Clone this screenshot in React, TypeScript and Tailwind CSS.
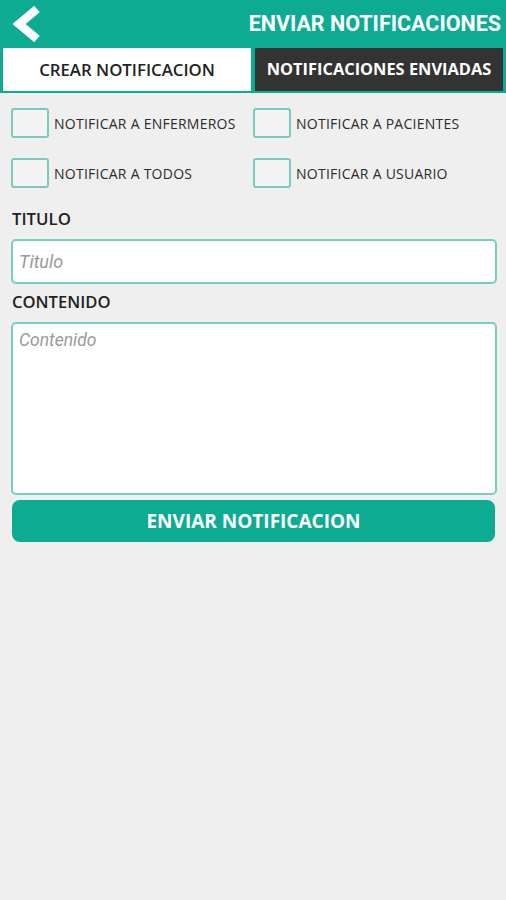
import React from "react";

const os = { fontFamily: '"Open Sans", "Noto Sans", sans-serif' };
const rb = { fontFamily: 'Roboto, "Liberation Sans", sans-serif' };

function Check({ label }: { label: string }) {
  return (
    <div className="flex items-center gap-[5px]">
      <div className="w-[38px] h-[30px] rounded-[3px] border-2 border-[#7ccabd] bg-[#f4f4f4] shrink-0" />
      <span className="text-[14px] tracking-[0.25px] text-[#2c2c2c]" style={os}>
        {label}
      </span>
    </div>
  );
}

export default function App() {
  return (
    <div className="w-[506px] h-[900px] bg-[#efefef] flex flex-col">
      <div className="h-[48px] bg-[#0cab92] flex items-center justify-between pl-[8px] pr-[5px]">
        <svg width="34" height="36" viewBox="0 0 34 36">
          <path d="M29 3 L11 18 L29 33" fill="none" stroke="white" strokeWidth="8.5" strokeLinejoin="miter" />
        </svg>
        <span className="text-white font-bold text-[21.5px] leading-none" style={rb}>
          ENVIAR NOTIFICACIONES
        </span>
      </div>
      <div className="bg-[#0cab92] h-[45px] flex px-[3px] pb-[2px] gap-[4px]">
        <div className="flex-1 bg-white flex items-center justify-center">
          <span className="text-[16.8px] font-semibold text-[#222]" style={os}>CREAR NOTIFICACION</span>
        </div>
        <div className="flex-1 bg-[#333333] flex items-center justify-center">
          <span className="text-[16.4px] font-bold text-white" style={os}>NOTIFICACIONES ENVIADAS</span>
        </div>
      </div>
      <div className="px-[11px] pt-[15px] flex flex-col">
        <div className="grid grid-cols-[242px_1fr] gap-y-[20px]">
          <Check label="NOTIFICAR A ENFERMEROS" />
          <Check label="NOTIFICAR A PACIENTES" />
          <Check label="NOTIFICAR A TODOS" />
          <Check label="NOTIFICAR A USUARIO" />
        </div>
        <div className="mt-[19px] pl-[1px] text-[16.8px] font-semibold text-[#222] leading-[24px]" style={os}>TITULO</div>
        <input
          className="mt-[8px] h-[45px] w-[486px] bg-white border-2 border-[#74cfc0] rounded-[5px] px-[6px] text-[18px] italic placeholder:text-[#9a9a9a] outline-none"
          style={rb}
          placeholder="Titulo"
        />
        <div className="mt-[6px] pl-[1px] text-[16.6px] font-semibold text-[#222] leading-[24px]" style={os}>CONTENIDO</div>
        <textarea
          className="mt-[8px] h-[173px] w-[486px] bg-white border-2 border-[#74cfc0] rounded-[5px] px-[6px] pt-[3px] text-[17.5px] italic placeholder:text-[#9a9a9a] outline-none resize-none"
          style={rb}
          placeholder="Contenido"
        />
        <button
          className="mt-[5px] ml-[1px] h-[42px] w-[483px] bg-[#0cab92] rounded-[8px] text-white text-[19px] font-bold flex items-center justify-center"
          style={os}
        >
          ENVIAR NOTIFICACION
        </button>
      </div>
    </div>
  );
}
